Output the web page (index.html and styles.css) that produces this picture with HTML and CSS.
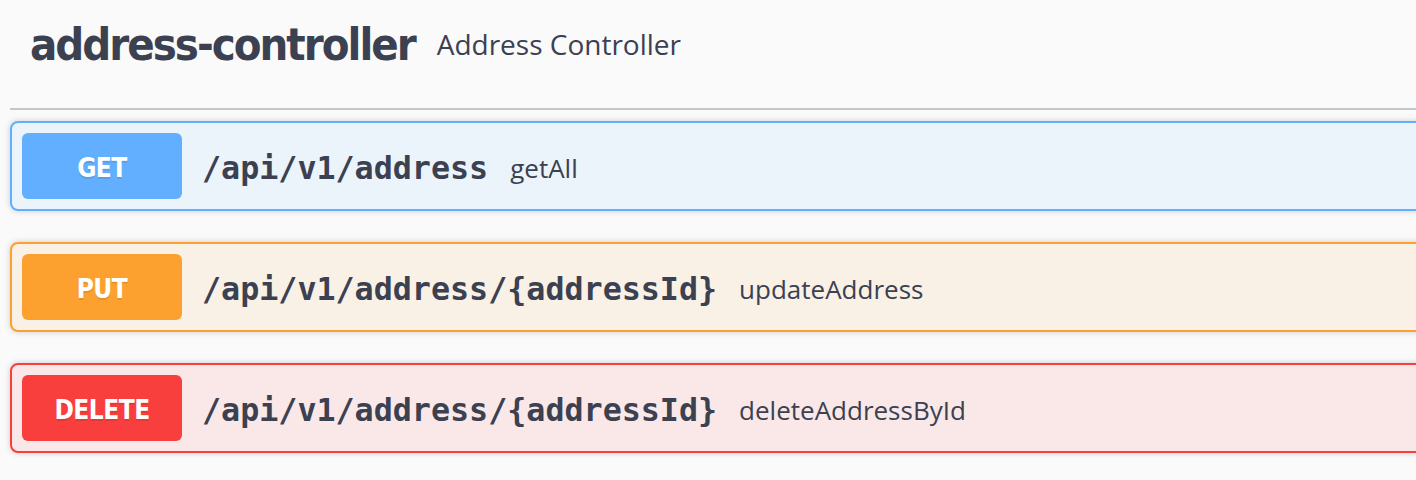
FILE: index.html
```html
<!DOCTYPE html>
<html lang="en">
<head>
<meta charset="utf-8">
<title>address-controller</title>
<link rel="stylesheet" href="styles.css">
</head>
<body>
<div class="section">
  <h4 class="tag">
    <span class="tag-name">address-controller</span>
    <small class="tag-desc">Address Controller</small>
  </h4>
  <div class="opblock opblock-get">
    <div class="summary">
      <span class="method">GET</span>
      <span class="path">/api/v1/address</span>
      <span class="desc">getAll</span>
    </div>
  </div>
  <div class="opblock opblock-put">
    <div class="summary">
      <span class="method">PUT</span>
      <span class="path">/api/v1/address/{addressId}</span>
      <span class="desc">updateAddress</span>
    </div>
  </div>
  <div class="opblock opblock-delete">
    <div class="summary">
      <span class="method">DELETE</span>
      <span class="path">/api/v1/address/{addressId}</span>
      <span class="desc">deleteAddressById</span>
    </div>
  </div>
</div>
</body>
</html>
```
FILE: styles.css
```css
html, body {
  margin: 0;
  padding: 0;
  background: #fafafa;
  overflow: hidden;
}

body {
  color: #3b4151;
  font-family: "Open Sans", "Noto Sans", sans-serif;
}

.section {
  width: 1440px;
  padding-left: 10px;
}

.tag {
  display: flex;
  align-items: center;
  height: 108px;
  box-sizing: content-box;
  margin: 0 0 11px 0;
  padding: 0 0 0 20px;
  border-bottom: 2px solid #c4c6cb;
  font-weight: normal;
}

.tag-name {
  font-family: "DejaVu Sans", sans-serif;
  font-stretch: condensed;
  font-weight: bold;
  font-size: 45px;
  letter-spacing: -2px;
  color: #3b4151;
  margin-bottom: 20px;
}

.tag-desc {
  font-family: "Open Sans", sans-serif;
  font-size: 28px;
  padding: 0 20px 0 22px;
  color: #3b4151;
  margin-bottom: 20px;
}

.opblock {
  margin: 0 0 31px 0;
  border: 2px solid #000;
  border-radius: 8px;
  box-shadow: 0 0 6px rgba(0, 0, 0, 0.19);
}

.summary {
  display: flex;
  align-items: center;
  padding: 10px;
}

.method {
  min-width: 160px;
  box-sizing: border-box;
  height: 66px;
  padding-top: 3px;
  display: flex;
  align-items: center;
  justify-content: center;
  border-radius: 6px;
  color: #fff;
  font-family: "DejaVu Sans", sans-serif;
  font-stretch: condensed;
  font-weight: bold;
  font-size: 26px;
  letter-spacing: -0.5px;
  text-shadow: 0 2px 0 rgba(0, 0, 0, 0.1);
}

.path {
  font-family: "DejaVu Sans Mono", monospace;
  font-weight: bold;
  font-size: 31.7px;
  padding: 4px 22px 0 20px;
  color: #3b4151;
}

.desc {
  font-family: "Open Sans", sans-serif;
  font-size: 26px;
  padding-top: 4px;
  color: #3b4151;
}

.opblock-get {
  background: #ebf3fb;
  border-color: #61affe;
}
.opblock-get .method { background: #61affe; }

.opblock-put {
  background: #f9f0e6;
  border-color: #fca130;
}
.opblock-put .method { background: #fca130; }

.opblock-delete {
  background: #fae7e7;
  border-color: #f93e3e;
}
.opblock-delete .method { background: #f93e3e; }
```
